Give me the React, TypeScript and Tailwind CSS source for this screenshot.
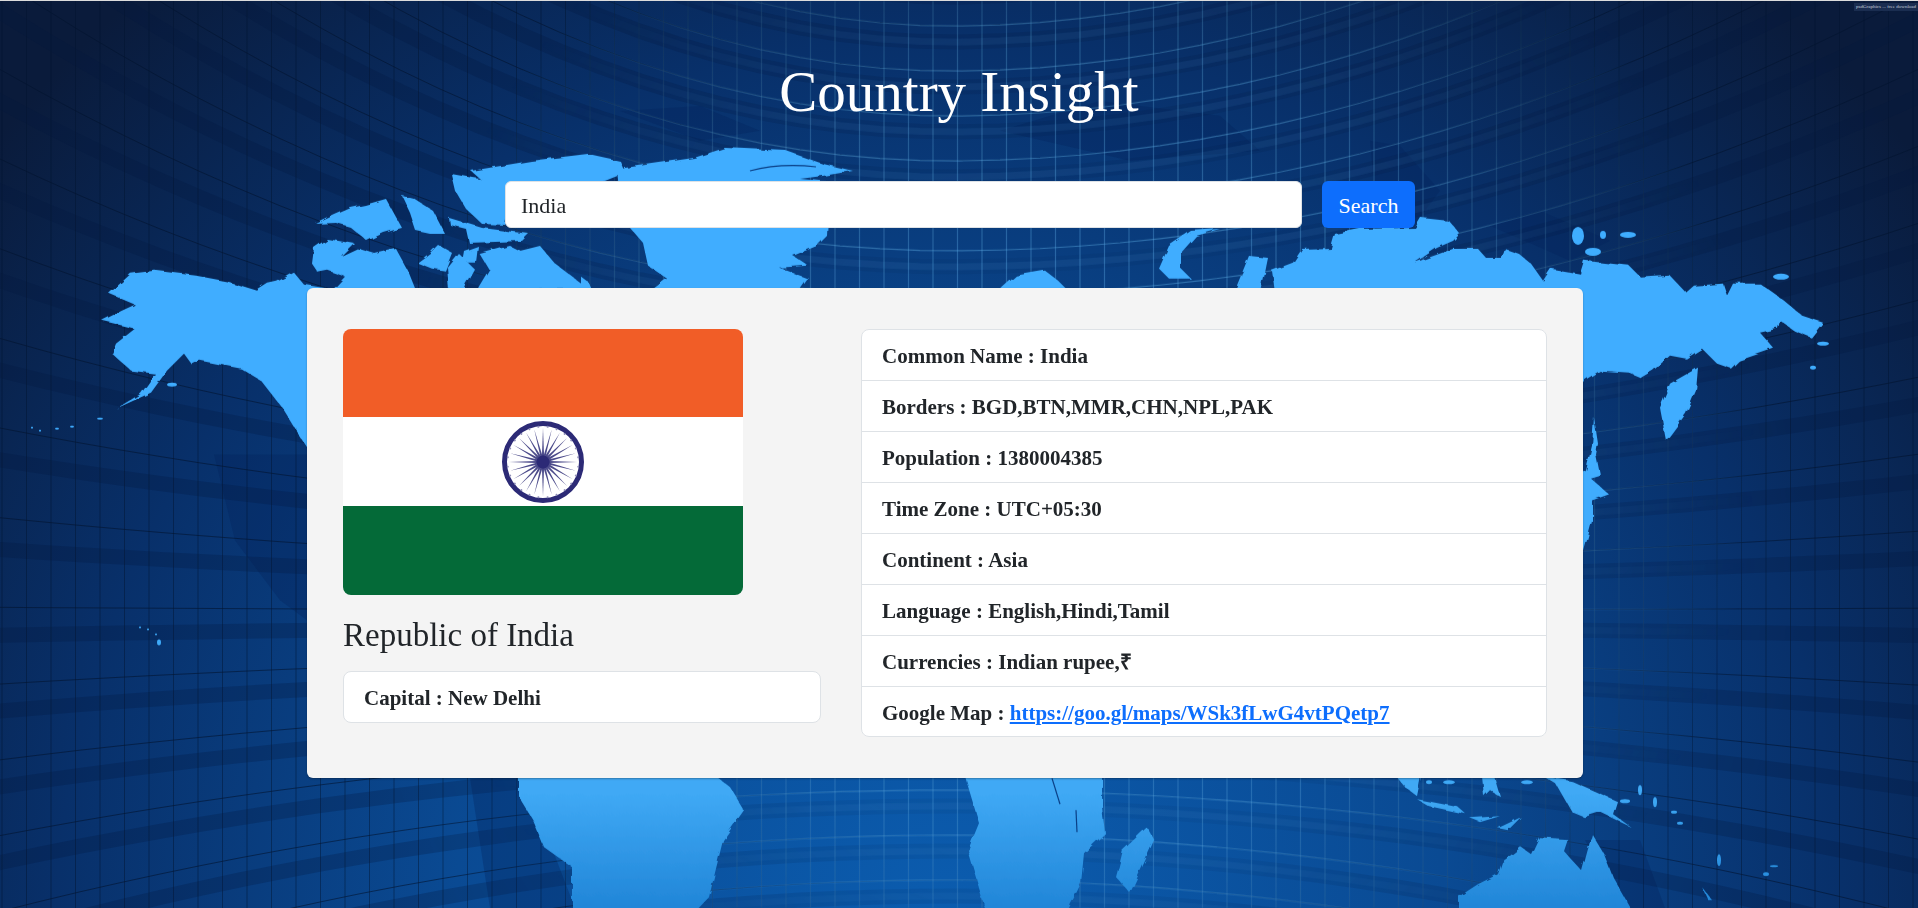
import React from 'react'

// map outline, in screenshot pixels
const land: string[] = [
  // alaska + canada main
  '109,293 131,273 155,270 196,275 228,281 257,290 268,283 277,281 294,272 304,284 316,286 330,288 420,296 420,480 307,447 298,433 282,407 261,380 241,368 200,360 192,364 184,353 167,370 151,392 116,408 141,393 155,373 131,370 112,353 116,343 135,328 102,320 122,310 135,304',
  // arctic islands
  '312,263 314,247 327,238 355,243 342,256 359,248 375,253 396,248 408,270 416,290 330,292 345,276 328,270 318,272',
  '316,223 335,214 351,207 365,204 386,198 402,227 384,232 367,240 350,226 336,222',
  '402,195 414,198 433,210 445,233 430,233 416,230 410,212',
  '417,262 430,252 438,244 452,252 445,270 432,268',
  '449,290 447,266 458,252 474,268 462,290',
  '464,250 478,245 476,262 462,262',
  '449,217 482,227 529,233 522,240 469,242 466,228 450,224',
  '451,173 473,177 506,182 510,200 505,224 482,223 465,207 455,190',
  '480,253 510,245 520,250 540,245 555,263 588,288 478,290 490,270',
  // ellesmere
  '471,170 531,160 588,153 620,160 625,172 600,182 510,190 480,178',
  // greenland
  '618,170 625,167 694,157 725,147 786,150 823,163 853,170 823,175 800,178 830,181 827,235 817,245 793,255 808,265 779,267 808,278 798,292 648,292 667,278 648,265 643,242 631,228 620,190',
  '580,275 588,281 592,292 580,292',
  // iceland
  '997,292 1016,275 1045,270 1058,280 1070,292',
  // scandinavia hook
  '1159,268 1169,245 1191,230 1220,228 1196,235 1181,252 1181,268 1191,278 1169,278',
  '1234,292 1249,255 1268,257 1261,292',
  // russia
  '1275,292 1272,270 1293,262 1302,248 1331,247 1335,233 1360,228 1415,227 1421,217 1449,220 1460,233 1453,240 1437,247 1415,262 1453,248 1478,248 1486,257 1502,257 1505,248 1519,253 1531,263 1543,280 1551,268 1580,273 1584,260 1629,265 1641,277 1670,275 1686,292 1694,285 1723,283 1727,295 1733,283 1760,283 1784,300 1802,315 1823,322 1811,337 1794,330 1780,320 1778,328 1760,332 1774,348 1739,360 1731,368 1717,363 1702,348 1686,358 1670,355 1653,370 1641,377 1629,372 1600,370 1584,380 1560,420 1560,292',
  '1698,367 1670,383 1660,407 1666,440 1686,413 1696,390',
  // japan
  '1575,550 1584,551 1592,521 1592,500 1609,494 1590,477 1600,474 1596,454 1598,443 1594,417 1592,445 1586,470 1575,480',
  // south america
  '519,776 519,797 533,820 544,847 572,867 572,912 695,912 709,897 723,840 744,810 730,787 716,776',
  // africa
  '965,776 979,823 968,850 986,912 1067,912 1081,883 1084,853 1105,833 1102,807 1102,776',
  '1147,827 1154,840 1144,863 1130,893 1116,877 1123,850',
  // australia + new guinea
  '1458,912 1458,897 1478,884 1498,874 1502,862 1521,847 1531,854 1539,837 1568,839 1564,851 1582,871 1592,834 1604,854 1613,877 1633,912',
  '1543,776 1572,781 1617,801 1613,814 1631,827 1600,812 1584,817 1572,812 1556,784',
  '1396,776 1421,776 1417,796 1405,787',
  '1417,799 1458,807 1466,814 1429,806',
  '1482,776 1494,776 1500,796 1490,790 1484,796',
  '1498,828 1521,817 1508,830',
  '1470,818 1500,816 1480,822',
  '1702,887 1712,900 1708,900',
]

const dots: [number, number, number, number][] = [
  [1578, 235, 6, 9], [1603, 234, 3, 4], [1628, 234, 8, 3], [1593, 251, 8, 4],
  [1781, 276, 8, 3], [1813, 367, 3, 2], [1823, 343, 6, 2], [1766, 874, 3, 2],
  [1719, 860, 2, 6], [1774, 866, 4, 1], [159, 642, 2, 3], [148, 629, 1, 1],
  [140, 627, 1, 1], [156, 634, 1, 1], [32, 427, 1, 1], [40, 430, 1, 1],
  [57, 428, 2, 1], [72, 426, 2, 1], [100, 418, 3, 1], [172, 384, 5, 2],
  [1640, 790, 2, 5], [1625, 801, 5, 2], [1655, 802, 2, 5], [1674, 812, 3, 1.5],
  [1680, 823, 3, 1.5], [1527, 782, 6, 2], [1449, 782, 6, 2], [1429, 782, 3, 2],
]

// the darker continents printed in the backdrop
const shadows: string[] = [
  '214,454 307,454 307,620 280,600 235,540',
  '1370,140 1400,145 1440,190 1410,230 1375,195',
  '1490,225 1540,210 1610,240 1570,260',
  '620,110 700,105 760,130 700,140',
  '1000,130 1100,100 1220,115 1260,150 1130,160',
  '1585,840 1640,840 1665,908 1620,908',
  '470,778 525,778 575,908 490,908',
]

const curve = (y0: number) => {
  const pts: string[] = []
  for (let x = -40; x <= 1960; x += 40) {
    const dx = x - 950
    const k = Math.max(7.6e-7 * (613 - y0), -1.8e-4) * (dx < 0 && y0 < 613 ? 1.45 : 1)
    pts.push(`${x},${(y0 - k * dx * dx).toFixed(1)}`)
  }
  return pts.join(' ')
}

const rows: number[] = []
for (let y = -200; y <= 1300; y += 45) rows.push(y)
const cols: number[] = []
for (let x = 2; x < 1918; x += 24.5) cols.push(x)

function Backdrop() {
  return (
    <svg className="absolute inset-0 h-full w-full" viewBox="0 0 1918 908" preserveAspectRatio="none">
      <defs>
        <radialGradient id="base" gradientUnits="userSpaceOnUse" cx="950" cy="930" r="1240">
          <stop offset="0" stopColor="#0b5db0" />
          <stop offset="0.4" stopColor="#0a4a93" />
          <stop offset="0.72" stopColor="#08306a" />
          <stop offset="1" stopColor="#0a1b3b" />
        </radialGradient>
        <linearGradient id="landFill" gradientUnits="userSpaceOnUse" x1="0" y1="450" x2="0" y2="908">
          <stop offset="0" stopColor="#3fadff" />
          <stop offset="0.75" stopColor="#3fa9f5" />
          <stop offset="1" stopColor="#2186d8" />
        </linearGradient>
        <radialGradient id="glowFade" gradientUnits="userSpaceOnUse" cx="1080" cy="450" r="680">
          <stop offset="0" stopColor="#fff" stopOpacity="1" />
          <stop offset="0.6" stopColor="#fff" stopOpacity="0.8" />
          <stop offset="1" stopColor="#fff" stopOpacity="0" />
        </radialGradient>
        <radialGradient id="edgeFade" gradientUnits="userSpaceOnUse" cx="1080" cy="560" r="900">
          <stop offset="0.35" stopColor="#fff" stopOpacity="0.25" />
          <stop offset="0.8" stopColor="#fff" stopOpacity="1" />
        </radialGradient>
        <mask id="glowMask" maskUnits="userSpaceOnUse" x="0" y="0" width="1918" height="908">
          <rect width="1918" height="908" fill="url(#glowFade)" />
        </mask>
        <mask id="edgeMask" maskUnits="userSpaceOnUse" x="0" y="0" width="1918" height="908">
          <rect width="1918" height="908" fill="url(#edgeFade)" />
        </mask>
        <filter id="rough" x="-2%" y="-2%" width="104%" height="104%">
          <feTurbulence type="fractalNoise" baseFrequency="0.09" numOctaves="2" seed="7" />
          <feDisplacementMap in="SourceGraphic" scale="5" />
        </filter>
      </defs>

      <rect width="1918" height="908" fill="url(#base)" />

      {shadows.map((s) => (
        <polygon key={s} points={s} fill="#03205a" opacity="0.3" />
      ))}

      {/* dark bands and dark grid */}
      <g mask="url(#edgeMask)">
        {rows.map((y) => (
          <polyline key={y} points={curve(y + 16)} fill="none" stroke="#04183f" strokeWidth="15" opacity="0.26" />
        ))}
        {rows.map((y) => (
          <polyline key={y} points={curve(y)} fill="none" stroke="#04142f" strokeWidth="1" opacity="0.6" />
        ))}
        {cols.map((x) => (
          <line key={x} x1={x} y1="0" x2={x} y2="908" stroke="#04142f" strokeWidth="1" opacity="0.45" />
        ))}
      </g>

      {/* bright grid in the middle */}
      <g mask="url(#glowMask)">
        {rows.map((y) => (
          <polyline key={y} points={curve(y + 16)} fill="none" stroke="#4f9be0" strokeWidth="7" opacity="0.12" />
        ))}
        {rows.map((y) => (
          <polyline key={y} points={curve(y)} fill="none" stroke="#5fb4f2" strokeWidth="1.2" opacity="0.55" />
        ))}
        {cols.map((x) => (
          <line key={x} x1={x} y1="0" x2={x} y2="908" stroke="#5fb4f2" strokeWidth="1.2" opacity="0.42" />
        ))}
      </g>

      <g filter="url(#rough)" fill="url(#landFill)">
        {land.map((p) => (
          <polygon key={p} points={p} />
        ))}
      </g>
      <g fill="url(#landFill)">
        {dots.map(([cx, cy, rx, ry]) => (
          <ellipse key={`${cx}-${cy}`} cx={cx} cy={cy} rx={rx} ry={ry} />
        ))}
      </g>
      <g stroke="#0a3f86" fill="none" strokeWidth="1.2">
        <path d="M1052 778 l8 26" />
        <path d="M1076 810 l1 22" />
        <path d="M750 170 q30 -8 66 -4" />
      </g>
    </svg>
  )
}

function Chakra() {
  const spokes = Array.from({ length: 24 }, (_, i) => i * 15)
  return (
    <svg width="84" height="84" viewBox="0 0 84 84" className="absolute left-[158px] top-[3px]">
      <circle cx="42" cy="42" r="38.5" fill="#fff" stroke="#2c2a76" strokeWidth="5" />
      {spokes.map((deg) => (
        <polygon key={deg} points="40.7,42 42,8 43.3,42" fill="#2c2a76" opacity="0.85" transform={`rotate(${deg} 42 42)`} />
      ))}
      {spokes.map((deg) => (
        <circle key={deg} cx="42" cy="6.5" r="1" fill="#8f8eb8" transform={`rotate(${deg + 7.5} 42 42)`} />
      ))}
      <circle cx="42" cy="42" r="6.5" fill="#2c2a76" />
    </svg>
  )
}

const details: [string, string][] = [
  ['Common Name', 'India'],
  ['Borders', 'BGD,BTN,MMR,CHN,NPL,PAK'],
  ['Population', '1380004385'],
  ['Time Zone', 'UTC+05:30'],
  ['Continent', 'Asia'],
  ['Language', 'English,Hindi,Tamil'],
  ['Currencies', 'Indian rupee,₹'],
]

const App = () => {
  return (
    <div className="relative h-[908px] overflow-hidden border-t border-[#dcdcdc] font-['Liberation_Serif',serif] text-[#212529]">
      <Backdrop />

      <div className="absolute right-0 top-[2px] whitespace-nowrap bg-[#1a2d50] pl-[2px] pr-[2px] text-[5px] leading-[8px] text-[#c3ccd9]">
        psdGraphics ... free download
      </div>

      <div className="relative flex flex-col">
        <h1 className="mt-[55px] h-[72px] text-center text-[57px] leading-[72px] text-white">Country Insight</h1>

        <form className="mt-[53px] flex justify-center gap-5 pl-[2px]">
          <input
            defaultValue="India"
            className="h-[47px] w-[797px] rounded-md border border-[#dee2e6] bg-white pl-[15px] pr-4 pt-[2px] text-[22px] text-[#212529] outline-none"
          />
          <button type="button" className="h-[47px] w-[93px] rounded-md bg-[#0d6efd] pt-[2px] text-[22px] text-white">
            Search
          </button>
        </form>

        <div className="ml-[307px] mt-[60px] grid h-[490px] w-[1276px] grid-cols-[478px_686px] gap-10 rounded-md bg-[#f4f4f4] px-9 py-[41px] shadow-[0_1px_2px_rgba(0,0,0,0.3)]">
          <div>
            <div className="flex h-[266px] w-[400px] flex-col overflow-hidden rounded-lg">
              <div className="h-[88px] bg-[#f15d27]" />
              <div className="relative h-[89px] bg-white">
                <Chakra />
              </div>
              <div className="flex-1 bg-[#046a38]" />
            </div>
            <h3 className="mt-[20px] h-[40px] text-[33px] leading-[40px]">Republic of India</h3>
            <div className="mt-[16px] flex h-[52px] items-center rounded-lg border border-[#dee2e6] bg-white px-5 pt-[3px] text-[21px] font-bold">
              Capital : New Delhi
            </div>
          </div>

          <ul className="h-[408px] rounded-lg border border-[#dee2e6] bg-white text-[21px] font-bold">
            {details.map(([label, value]) => (
              <li key={label} className="flex h-[51px] items-center whitespace-pre border-b border-[#dee2e6] px-5 pt-[3px]">
                {label} : {value}
              </li>
            ))}
            <li className="flex h-[50px] items-center whitespace-pre px-5 pt-[3px]">
              Google Map : <a href="#" className="text-[#0d6efd] underline">https://goo.gl/maps/WSk3fLwG4vtPQetp7</a>
            </li>
          </ul>
        </div>
      </div>
    </div>
  )
}

export default App
